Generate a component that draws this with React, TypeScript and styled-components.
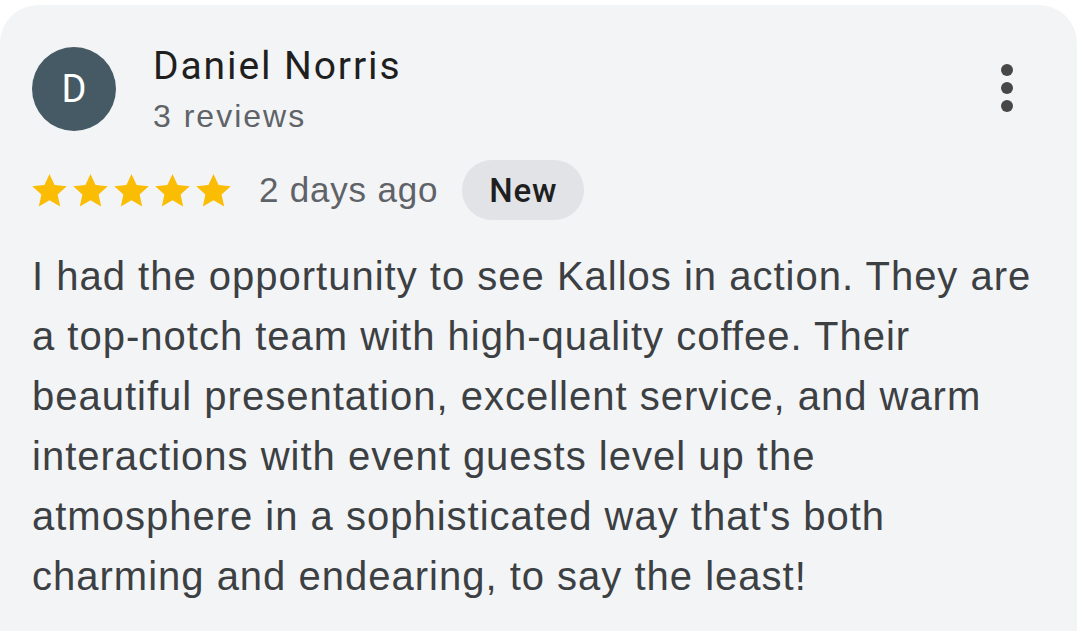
import React from 'react';
import styled, { createGlobalStyle } from 'styled-components';

const GlobalStyle = createGlobalStyle`
  html, body {
    margin: 0;
    padding: 0;
    background: #ffffff;
  }
`;

const reviewLines = [
  'I had the opportunity to see Kallos in action. They are',
  'a top-notch team with high-quality coffee. Their',
  'beautiful presentation, excellent service, and warm',
  'interactions with event guests level up the',
  "atmosphere in a sophisticated way that's both",
  'charming and endearing, to say the least!',
];

const App: React.FC = () => {
  return (
    <Page>
      <GlobalStyle />
      <Card>
        <Header>
          <Avatar>D</Avatar>
          <Author>
            <Name>Daniel Norris</Name>
            <ReviewCount>3 reviews</ReviewCount>
          </Author>
          <MoreButton aria-label="More">
            <Dot />
            <Dot />
            <Dot />
          </MoreButton>
        </Header>
        <MetaRow>
          <Stars>
            {[0, 1, 2, 3, 4].map((i) => (
              <Star key={i} viewBox="0 0 24 24">
                <path d="M12 2.3l2.95 6.55 7.15.72-5.37 4.78 1.53 7.03L12 17.75l-6.26 3.63 1.53-7.03L1.9 9.57l7.15-.72z" />
              </Star>
            ))}
          </Stars>
          <When>2 days ago</When>
          <Chip>New</Chip>
        </MetaRow>
        <Body>
          {reviewLines.map((line) => (
            <Line key={line}>{line}</Line>
          ))}
        </Body>
      </Card>
    </Page>
  );
};

const Page = styled.div`
  width: 1085px;
  height: 631px;
  padding-top: 5px;
  box-sizing: border-box;
  background: #ffffff;
  overflow: hidden;
`;

const Card = styled.div`
  width: 1077px;
  height: 640px;
  box-sizing: border-box;
  background: #f3f4f6;
  border-radius: 38px 38px 0 0;
  padding: 37px 0 0 32px;
`;

const Header = styled.div`
  display: flex;
  align-items: flex-start;
`;

const Avatar = styled.div`
  width: 84px;
  height: 84px;
  border-radius: 50%;
  background: #455a64;
  color: #ffffff;
  display: flex;
  align-items: center;
  justify-content: center;
  font-family: Roboto, "Liberation Sans", sans-serif;
  font-size: 38px;
  margin-top: 5px;
  flex-shrink: 0;
`;

const Author = styled.div`
  display: flex;
  flex-direction: column;
  margin-left: 37px;
  flex: 1;
`;

const Name = styled.div`
  font-family: Roboto, "Liberation Sans", sans-serif;
  font-size: 39px;
  letter-spacing: 1.9px;
  line-height: 48px;
  color: #1f1f1f;
`;

const ReviewCount = styled.div`
  font-family: "Liberation Sans", Arial, sans-serif;
  font-size: 32px;
  letter-spacing: 2px;
  line-height: 36px;
  color: #5f6368;
  margin-top: 8px;
`;

const MoreButton = styled.div`
  display: flex;
  flex-direction: column;
  align-items: center;
  gap: 6px;
  margin: 22px 64px 0 0;
`;

const Dot = styled.span`
  width: 12px;
  height: 12px;
  border-radius: 50%;
  background: #474747;
`;

const MetaRow = styled.div`
  display: flex;
  align-items: center;
  margin-top: 26px;
`;

const Stars = styled.div`
  display: flex;
  margin-left: -3px;
`;

const Star = styled.svg`
  width: 41px;
  height: 41px;
  fill: #fbbc04;
`;

const When = styled.span`
  font-family: "Liberation Sans", Arial, sans-serif;
  font-size: 35px;
  letter-spacing: 0.8px;
  color: #5f6368;
  margin-left: 25px;
`;

const Chip = styled.span`
  display: inline-flex;
  align-items: center;
  justify-content: center;
  height: 60px;
  width: 122px;
  border-radius: 30px;
  background: #e1e3e6;
  color: #1f1f1f;
  font-family: Roboto, "Liberation Sans", sans-serif;
  font-weight: 500;
  letter-spacing: 0.8px;
  font-size: 33px;
  margin-left: 24px;
`;

const Body = styled.div`
  margin-top: 26px;
  font-family: "Liberation Sans", Arial, sans-serif;
  font-size: 40px;
  letter-spacing: 1px;
  line-height: 60px;
  color: #3c4043;
`;

const Line = styled.div`
  white-space: nowrap;
`;

export default App;
